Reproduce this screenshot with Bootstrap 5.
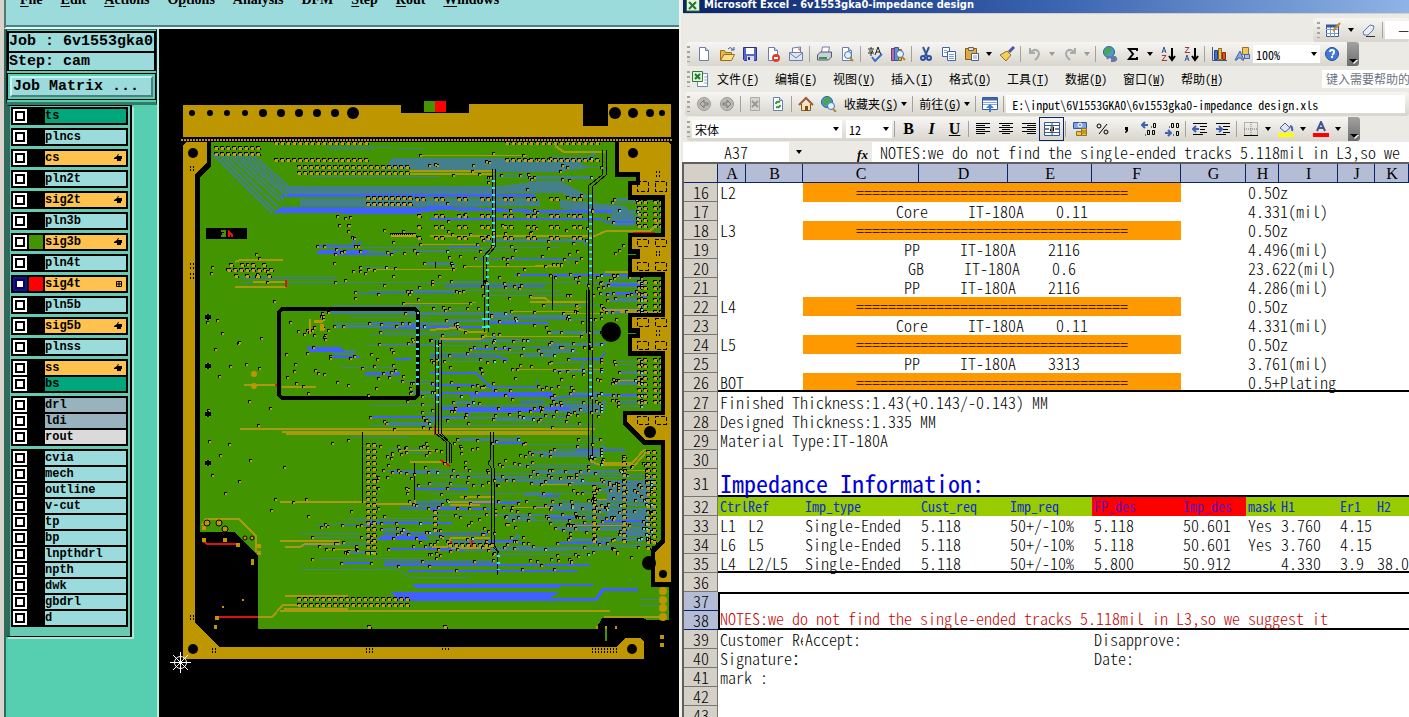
<!DOCTYPE html>
<html lang="zh-CN">
<head>
<meta charset="utf-8">
<meta name="viewport" content="width=device-width, initial-scale=1">
<title>Impedance design review</title>
<link href="https://cdn.jsdelivr.net/npm/bootstrap@5.3.0/dist/css/bootstrap.min.css" rel="stylesheet">
<style>
body{background:#000;color:#000;font-family:"Liberation Sans",sans-serif;line-height:1}
a{color:inherit;text-decoration:none}
/* CAM window */
.cam{flex:678 1 0;min-width:0;border-left:4px solid #d8d4cc;background:#000}
.cam-menu{height:29px;flex:none;background:#9cdbdb;border-bottom:2px solid #e6f7f4;border-left:2px solid #4a7a72;box-shadow:inset 0 -2px #4d8085;gap:18px;padding-left:14px;font:bold 14px/16px "Liberation Serif",serif}
.cam-menu a{margin-top:-8px;height:16px;text-underline-offset:2px}
.cam-side{width:155px;flex:none;background:#55cfb0;border-left:2px solid #2f6b5c;border-right:2px solid #b9ede0;font-family:"Liberation Mono",monospace;font-weight:bold}
.job{border:1px solid #123;border-bottom:3px solid #2f7c6b;border-top-color:#2f7c6b;padding:1px 0 2px;font-size:15px;height:76px;background:#55cfb0}
.job-line{height:20px;border:2px solid #000;border-bottom-width:0;background:#9cdbdb;line-height:18px;white-space:pre}
.job-line+.job-line{height:20px;border-bottom-width:1px}
.job-btn-box{border:1px solid #000;padding:2px;margin-top:2px;height:27px}
.job-btn{background:#9cdbdb;border:2px solid;border-color:#c8f3ef #4d8085 #4d8085 #c8f3ef;border-radius:0;font:bold 15px/18px "Liberation Mono",monospace;padding:0 0 0 1px;width:100%;text-align:left;height:21px;display:block}
.layers{width:126px;border:1px solid #000;border-width:1px 2px 1px 4px;border-left-color:#2f6b5c;padding:1px 2px 9px 1px;box-shadow:2px 2px #a9e8d8;gap:3px;background:#67cbb4;font-size:12px}
.grp{border:2px solid #000;background:#000;gap:2px}
.ly{height:14px;line-height:14px}
.ly input{appearance:none;width:14px;height:14px;margin:0;flex:none;border:2px solid #fff;background:#fff;box-shadow:inset 0 0 0 2px #000}
.ly input:checked{border-color:#10109a;box-shadow:inset 0 0 0 2px #06065a}
.sw{width:14px;margin:0 2px;background:#000;flex:none;height:14px}
.sw.g{background:#429500}.sw.r{background:#f00}
.nm{background:#9cdbdb;color:#000}
.nm.t{background:#00a67c}.nm.o{background:#ffc24e}.nm.s{background:#98b3bd}.nm.w{background:#dadada}
.board{min-width:0;background:#000}
/* spreadsheet window */
.xl{flex:731 1 0;min-width:0;background:#eceae5;border-left:2px solid #f4f2ee;font-family:"Noto Sans CJK SC","Noto Sans CJK TC",sans-serif;font-feature-settings:"hwid","liga" 0;font-size:12px}
.xl input,.xl button,.xl select{font:inherit;font-feature-settings:inherit;color:inherit;border:0;border-radius:0;background:none;padding:0;margin:0;line-height:normal}
.xl svg{display:block;flex:none}
.title{height:14px;flex:none;background:linear-gradient(90deg,#0a246a,#3a62ae 50%,#8fb4e6);color:#fff;font:bold 11px/10px "DejaVu Sans Condensed","DejaVu Sans",sans-serif;padding-left:3px;margin-left:2px;border-bottom:1px solid #d4d0c8}
.bar{height:24px;flex:none;padding-left:2px;margin:0 0 1px 4px}
.shade{background:linear-gradient(#f7f6f3,#d8d5cd);border-radius:3px}
.grip{width:3px;height:16px;margin-right:2px;background:repeating-linear-gradient(#a5a29a 0 2px,transparent 2px 5px);flex:none}
.xl .ib{width:23px;height:22px;flex:none;display:flex;align-items:center;justify-content:center}
.xl .ar{width:12px;height:20px;flex:none;display:flex;align-items:center;justify-content:center}
.ar::before{content:"";border:3px solid transparent;border-top:4px solid #000;border-bottom:0}
.ar.off::before{border-top-color:#999}
.letter{font:16px "Liberation Serif",serif}
.fx{font:italic bold 13px "Liberation Serif",serif}
.sp{width:1px;height:16px;background:#a5a29a;margin:0 2px;flex:none}
.cap{width:12px;height:24px;flex:none;background:linear-gradient(#a2a2a2,#6d6d6d);display:flex;align-items:end;justify-content:center;padding-bottom:3px;border-radius:0 3px 3px 0}
.cap::before{content:"";border:4px solid transparent;border-top:4px solid #000;border-bottom:0;filter:drop-shadow(1px 1px #fff)}
.box{background:#fff;height:18px;display:flex;align-items:center}
.xl .box input{min-width:0;width:100%;padding-left:3px}
.xl .box .addr{padding-left:6px}
.w-font{width:150px}.w-size{width:46px}.w-zoom{width:67px}.w-help{width:87px}
.draw-bar{width:96px;height:24px}
.mi{width:58px;padding-left:8px;white-space:nowrap;line-height:18px}
.sel{background:#dbe0ec;outline:1px solid #0a246a}
.fbar{height:20px;flex:none;font-size:16px}
.fbar input{height:20px}
.xl .namebox{width:106px;text-align:center;background:#fff;margin-left:2px}
.xl .fin{background:#fff;padding-left:8px;min-width:0}
.xl .fbar input{font-weight:300}
.sheet-wrap{background:#fff;border-left:2px solid #606060;border-top:2px solid #606060;margin-left:1px;min-height:0}
.sheet{table-layout:fixed;border-collapse:separate;border-spacing:0;width:100%;font-size:16px;line-height:19px;font-weight:300}
.c-n{width:34px}.c-a{width:28px}.c-b{width:57px}.c-c{width:116px}.c-d{width:89px}.c-e{width:84px}.c-g{width:65px}.c-h{width:33px}.c-i{width:59px}.c-j{width:37px}
.sheet tr{height:19px}
.sheet td,.sheet th{padding:0;white-space:pre;font-weight:300;height:19px}
.sheet td{padding-left:2px}
.sheet tbody th{background:#d4d0c8;text-align:center;box-shadow:inset 0 -1px #77756d,inset -1px 0 #77756d}
.sheet tbody .gap th{height:20px}
.sheet thead th{background:#b5bdd6;text-align:center;height:18px;line-height:18px;box-shadow:inset -1px 0 #0a246a,inset 0 -1px #0a246a;font-family:"Liberation Serif",serif;font-weight:400}
.sheet thead th:first-child{background:#d4d0c8}
.sheet .mid{text-align:center;padding:0}
.sheet .cu{background:#ff9900}
.sheet .rule td{box-shadow:inset 0 -2px #000}
.sheet .tall td{height:28px;font-size:24px;line-height:28px;color:#0000d8;font-weight:400}
.sheet .hd td{background:#99cc00;font-size:14px;color:#1030d0;font-weight:400}
.sheet .hd .rd{background:#f00;color:#6a10b8}
.sheet tbody th.on{background:#b5bdd6;box-shadow:inset 0 -1px #0a246a}
.sheet .note{border:2px solid #000;border-right:0;vertical-align:bottom;color:#c40000;padding-left:0}
.sheet .cut{overflow:hidden}
</style>
</head>
<body class="vh-100 overflow-hidden d-flex">

<section class="cam d-flex flex-column">
  <nav class="cam-menu d-flex overflow-hidden">
    <a href="#"><u>F</u>ile</a><a href="#"><u>E</u>dit</a><a href="#"><u>A</u>ctions</a><a href="#">O<u>p</u>tions</a><a href="#">Analysis</a><a href="#">DFM</a><a href="#"><u>S</u>tep</a><a href="#"><u>R</u>out</a><a href="#"><u>W</u>indows</a>
  </nav>
  <div class="d-flex flex-grow-1 overflow-hidden">
    <aside class="cam-side">
      <div class="job">
        <div class="job-line">Job : 6v1553gka0</div>
        <div class="job-line">Step: cam</div>
        <div class="job-btn-box"><button class="job-btn" type="button">Job Matrix ...</button></div>
      </div>
      <div class="layers d-flex flex-column" id="layers"></div>
    </aside>
    <svg class="board flex-grow-1 h-100" viewBox="159 29 519 688" preserveAspectRatio="xMinYMin meet" shape-rendering="crispEdges" fill="none" role="img" aria-label="Board layout">
      <!-- substrate -->
      <path fill="#429500" d="M211 142H664V587H669V622H650L643 618H602L596 629H258V555L234 532H200V178L211 166Z"/>
      <g id="traces"></g>
      <!-- thick buses -->
      <path fill="#44808b" d="M283 186H500L540 181H560L592 198H570L562 193H500L490 196H290ZM392 158H500L530 162L575 160L590 168L560 171H500L385 169ZM300 199H540V206H300ZM560 200L625 206L634 214V226H612V214L560 208ZM607 482H648V500H607ZM607 508H648V520H607ZM507 517H535V521H507ZM524 492H552V496H524ZM333 350H355V355H333Z"/>
      <path fill="#4060ff" d="M272 213L282 207H413L440 206L540 210H612V213H540L440 210L412 214ZM278 197L284 194H535V197ZM390 592H560L550 598H595L602 588H638V591H604L597 601H400ZM306 347H340L345 352H310ZM470 392H551L556 397H470ZM441 407H570V410H441ZM365 372H400V375H365ZM382 536H425L430 540H376ZM320 250H372L360 254H315Z"/>
      <path stroke="#4060ff" stroke-width="2" d="M384 562H495M384 565H590M408 571H577M413 585H593M415 587H560M380 328H430M430 219H600L606 222H636M450 247H480M430 327H490M515 275H630M490 323H549M430 356H495L508 360M430 373H476L495 391M430 385H480M445 286H545M435 399L443 393H540L552 399L570 396H600M600 395H637M575 450H625M400 508H462M416 489H468M430 509H490M370 523H452M383 534H488M330 357H360M395 359H412M540 496H560M520 402H545"/>
      <path stroke="#44808b" stroke-width="2" d="M213 154L272 213M218 154L275 211M223 154L278 207M228 154L281 202M233 154L284 200M238 155L287 196M243 155L287 193M248 155L287 189M253 155L288 186"/>
      <path stroke="#44808b" d="M325 147H393M330 149H375M425 148H395M310 176H440M318 247H560M243 279H337M240 276H335M240 282H430M372 282H590M370 290H560M332 305H440M350 317H430M333 323H420M365 345H440M370 334H460M340 367H395M395 380H430M370 405H460M370 425H600M350 437H410M388 449H424M318 558H425M300 569H397L410 577H470M355 520H420M300 533H360M315 526L345 523L350 518H440M298 545H370M430 340H560M430 345H500M430 352H580M430 418H520M430 473H600M430 477H640M430 493H610M430 500H580M430 515H600M560 530H640M510 550H570M607 485H650M607 545H648M640 599H662M640 605H662"/>
      <!-- gold and red tracks -->
      <g stroke="#a89a10" stroke-width="2">
        <path d="M410 171H494M410 174H494M240 429H595M282 432H590M286 434H590M244 385H281M282 387H316M280 502H366M366 504H415L415 500M235 262L240 260H283M253 282H286M235 287H286M430 236H595L606 231H650L664 215M535 266H560M530 302H590M531 298L545 298L550 302M555 146L564 152H605M202 525L206 519H239L256 536V552M285 596H348M284 609H348M280 611H610M258 617H272L283 605H298M280 541H340M285 547H300L305 544H340M280 502H360M430 330L455 328L470 332H487M440 339H480L487 335M590 461L600 465H635L648 450M600 463H632L645 449M450 502H494M450 505H480M432 547H447L451 538H490M451 548H490M410 462H450M620 312H662M605 272H650M600 310H640M604 617H662M460 497H494"/>
      </g>
      <path stroke="#e01010" stroke-width="2" d="M203 541L207 544H237M217 617H258M629 239L634 233H655M275 385H281M286 280V287M435 425V435M440 460L450 466M451 541V547M472 539V547"/>
      <!-- black clearances along vertical tracks -->
      <path stroke="#000" d="M492 169V247L483 257V285M495 169V247L486 258V285M602 150V175L588 186V460M606 150V175L592 187V460M484 285V332M488 285V332M586 290V333M589 290V350M435 340V433L446 442V463M438 340V433L449 442V463M441 340V433L451 444V463M490 432V460L488 463L491 468V545L497 551V575M493 432V460L494 468V545L499 553M362 432V503M414 463V500M552 275V310M435 262V268"/>
      <path stroke="#000" stroke-width="4" d="M282 309H415L418 312V395L415 398H282L279 395V312Z"/>
      <path stroke="#30e8f0" stroke-dasharray="2 5" stroke-width="3" d="M493 180V245M590 195V280M487 255V330M437 345V405M417 320V390M590 365V400M498 555V570"/>
      <path fill="#30e8f0" d="M628 190H640L634 197ZM482 318H490V320H482ZM482 326H490V328H482Z"/>
      <!-- connector pad rows -->
      <g id="rows"></g>
      <g id="pads"></g>
      <!-- frame -->
      <path stroke="#000" stroke-width="9" d="M619 142H668L671 145V582H655V552L665 542V440H645L627 422V415H665V351H632V338H640V328H632V317H665V272H632V259H640V249H632V237H665V195H632V185H640V172H619Z"/>
      <path fill="#000" d="M671 137H678V717H671ZM605 137H678V142H605ZM656 582H678V587H656ZM602 620H678V717H602Z"/>
      <g fill="#be9600">
        <path d="M619 142H668L671 145V582H655V552L665 542V440H645L627 422V415H665V351H632V338H640V328H632V317H665V272H632V259H640V249H632V237H665V195H632V185H640V172H619Z"/>
        <path d="M183 105H401V113H469V104H583V126H608V104H671V137H183Z"/>
        <path d="M186 142H207V162L195 174V623L219 647H617L625 638H640L644 642V659H183V145Z"/>
        <path d="M202 526h4v4h-4zM202 538h4v4h-4zM223 538h4v4h-4zM236 543h4v4h-4zM215 616h4v4h-4zM214 625h3v4h-3zM251 559h3v6h-3zM257 551h4v4h-4zM257 544h4v4h-4zM242 599h2v2h-2zM222 606h2v2h-2zM660 635h4v4h-4zM660 643h4v4h-4zM596 626h2v3h-2zM615 626h2v3h-2zM605 626h2v3h-2z"/>
      </g>
      <path stroke="#be9600" stroke-width="2" stroke-dasharray="2 1" d="M181 139.500H673"/>
      <g stroke="#000" stroke-dasharray="4 2"><rect x="637" y="181" width="11" height="10"/><rect x="655" y="181" width="11" height="10"/><rect x="637" y="239" width="11" height="7"/><rect x="655" y="239" width="11" height="7"/><rect x="637" y="262" width="11" height="8"/><rect x="655" y="262" width="11" height="8"/><rect x="637" y="318" width="11" height="8"/><rect x="655" y="318" width="11" height="8"/><rect x="637" y="341" width="11" height="8"/><rect x="655" y="341" width="11" height="8"/><rect x="637" y="416" width="11" height="8"/><rect x="655" y="416" width="11" height="8"/></g>
      <path stroke="#000" stroke-width="2" stroke-dasharray="1 2" d="M190 167h6M190 170h6M190 264h6M190 268h6M190 274h6M190 278h6M190 616h6M190 619h6M212 649h6M212 652h6M366 649h8M366 652h8M442 649h8M592 649h26M592 652h26M656 172h6M656 176h6M656 252h6M656 255h6M656 331h6M656 335h6"/>
      <g fill="#000" shape-rendering="auto">
        <circle cx="192" cy="113" r="3"/><circle cx="210" cy="113" r="3"/><circle cx="227" cy="113" r="3"/><circle cx="245" cy="113" r="3"/><circle cx="263" cy="113" r="4"/><circle cx="281" cy="113" r="4"/><circle cx="299" cy="113" r="4"/><circle cx="317" cy="113" r="4"/><circle cx="335" cy="113" r="4"/><circle cx="353" cy="113" r="6"/>
        <circle cx="615" cy="113" r="6"/><circle cx="633" cy="113" r="5"/><circle cx="650" cy="113" r="4"/><circle cx="662" cy="113" r="3"/>
        <circle cx="193" cy="153" r="5"/><circle cx="193" cy="649" r="5"/><circle cx="632" cy="649" r="5"/><circle cx="633" cy="153" r="5"/><circle cx="611" cy="332" r="10"/><circle cx="650" cy="432" r="6"/><circle cx="663" cy="574" r="4"/><circle cx="649" cy="563" r="7"/>
      </g>
      <g fill="#be9600" shape-rendering="auto"><circle cx="663" cy="591" r="4"/><circle cx="663" cy="600" r="4"/><circle cx="663" cy="608" r="4"/><circle cx="663" cy="617" r="4"/><circle cx="254" cy="374" r="3"/><circle cx="254" cy="386" r="3"/></g>
      <g fill="#be9600" stroke="#000" shape-rendering="auto"><circle cx="207" cy="523" r="3"/><circle cx="219" cy="523" r="3"/><circle cx="225" cy="529" r="3"/><circle cx="245" cy="538" r="2"/><circle cx="252" cy="538" r="2"/></g>
      <path fill="#be9600" d="M309 319h2v14h-2zM314 320h9v3h-9zM320 324h4v7h-4z"/>
      <path fill="#429500" d="M424 101h11v11h-11z"/><path fill="#f00" d="M435 101h11v11h-11z"/>
      <path fill="#000" d="M206 228h41v11h-41z"/>
      <path stroke="#429500" stroke-width="2" d="M221 231h4v5h-4M222 234h4"/><path fill="#f01010" d="M228 230l5 4v3h-2v-2h-1v2h-2z"/>
      <path stroke="#429500" stroke-width="2" d="M606 629V641"/>
      <g stroke="#fff" shape-rendering="auto"><path d="M170 662.500H191M180.500 652V673M173 655L188 670M188 655L173 670"/><circle cx="180.500" cy="662.500" r="6"/></g>
    </svg>
  </div>
</section>

<main class="xl d-flex flex-column overflow-hidden">
  <div class="title d-flex overflow-hidden">
    <svg width="14" height="12" viewBox="0 0 14 12" class="me-1"><path fill="#e9f1e4" stroke="#2e7d32" d="M.5-2h13v13H.5z"/><path stroke="#1c7a2e" stroke-width="2" d="M3 2l7 7M10 2L3 9"/></svg>
    <span class="text-nowrap">Microsoft Excel - 6v1553gka0-impedance design</span>
  </div>
  <div class="bar d-flex justify-content-end mt-1 mb-0 align-items-center">
    <div class="shade draw-bar d-flex align-items-center ps-1">
      <span class="grip"></span>
      <button class="ib" type="button" aria-label="绘图边框"><svg width="17" height="16" fill="none"><path fill="#fff" stroke="#35589a" d="M1.500 3.500h12v11h-12z"/><path stroke="#7c9bd0" d="M1 7.500h12M1 11.500h12M5.500 4v11M9.500 4v11"/><path stroke="#35589a" stroke-width="3" d="M1 4h12"/><path stroke="#c98a2a" stroke-width="2" d="M8 9l7-8"/></svg></button><button class="ar" type="button" aria-label="更多"></button>
      <button class="ib" type="button" aria-label="擦除"><svg width="16" height="14" fill="none"><path fill="#e9eef8" stroke="#6178a8" d="M2 9l7-7 4 1-1 4-5 5H3z"/><path stroke="#333" d="M5 13.500h9"/></svg></button>
      <span class="sp"></span><span class="box flex-grow-1 justify-content-end">—</span>
    </div>
  </div>
  <div class="bar d-flex">
    <div class="shade d-flex align-items-center" id="std"><span class="grip"></span></div>
  </div>
  <div class="bar d-flex align-items-center">
    <span class="grip"></span>
    <svg width="17" height="16" fill="none"><path fill="#fff" stroke="#6c86b8" d="M5.500 2.500h10v13h-10z"/><path stroke="#9ab" d="M12 6h3M12 9h3M12 12h3"/><path fill="#dff0dc" stroke="#2e7d32" d="M.5.5h10v10H.5z"/><path stroke="#1c7a2e" stroke-width="2" d="M3 3l5 5M8 3L3 8"/></svg>
    <nav class="d-flex flex-grow-1">
      <a href="#" class="mi">文件(<u>F</u>)</a><a href="#" class="mi">编辑(<u>E</u>)</a><a href="#" class="mi">视图(<u>V</u>)</a><a href="#" class="mi">插入(<u>I</u>)</a><a href="#" class="mi">格式(<u>O</u>)</a><a href="#" class="mi">工具(<u>T</u>)</a><a href="#" class="mi">数据(<u>D</u>)</a><a href="#" class="mi">窗口(<u>W</u>)</a><a href="#" class="mi">帮助(<u>H</u>)</a>
    </nav>
    <span class="box w-help overflow-hidden text-nowrap text-secondary ps-1">键入需要帮助的</span>
  </div>
  <div class="bar shade d-flex align-items-center" id="web">
    <span class="grip"></span>
  </div>
  <div class="bar d-flex">
    <div class="shade d-flex align-items-center" id="fmt"><span class="grip"></span></div>
  </div>
  <div class="fbar d-flex align-items-center">
    <input class="namebox" value="A37" aria-label="名称框">
    <button class="ar mx-1" type="button" aria-label="名称列表"></button>
    <button type="button" class="ms-5 me-1" aria-label="插入函数"><i class="fx">fx</i></button>
    <input class="fin flex-grow-1" aria-label="编辑栏" value="NOTES:we do not find the single-ended tracks 5.118mil in L3,so we suggest it">
  </div>
  <div class="sheet-wrap flex-grow-1 overflow-hidden">
    <table class="sheet">
      <colgroup><col class="c-n"><col class="c-a"><col class="c-b"><col class="c-c"><col class="c-d"><col class="c-e"><col class="c-d"><col class="c-g"><col class="c-h"><col class="c-i"><col class="c-j"><col></colgroup>
      <thead><tr><th></th><th>A</th><th>B</th><th>C</th><th>D</th><th>E</th><th>F</th><th>G</th><th>H</th><th>I</th><th>J</th><th>K</th></tr></thead>
      <tbody>
        <tr><th>16</th><td>L2</td><td></td><td colspan="4" class="mid cu">==================================</td><td></td><td colspan="4">0.5Oz</td></tr>
        <tr><th>17</th><td></td><td></td><td colspan="4" class="mid">Core     IT-180A    0.11</td><td></td><td colspan="4">4.331(mil)</td></tr>
        <tr><th>18</th><td>L3</td><td></td><td colspan="4" class="mid cu">==================================</td><td></td><td colspan="4">0.5Oz</td></tr>
        <tr><th>19</th><td></td><td></td><td colspan="4" class="mid">PP     IT-180A    2116</td><td></td><td colspan="4">4.496(mil)</td></tr>
        <tr><th>20</th><td></td><td></td><td colspan="4" class="mid">GB     IT-180A    0.6</td><td></td><td colspan="4">23.622(mil)</td></tr>
        <tr><th>21</th><td></td><td></td><td colspan="4" class="mid">PP     IT-180A    2116</td><td></td><td colspan="4">4.286(mil)</td></tr>
        <tr><th>22</th><td>L4</td><td></td><td colspan="4" class="mid cu">==================================</td><td></td><td colspan="4">0.5Oz</td></tr>
        <tr><th>23</th><td></td><td></td><td colspan="4" class="mid">Core     IT-180A    0.11</td><td></td><td colspan="4">4.331(mil)</td></tr>
        <tr><th>24</th><td>L5</td><td></td><td colspan="4" class="mid cu">==================================</td><td></td><td colspan="4">0.5Oz</td></tr>
        <tr><th>25</th><td></td><td></td><td colspan="4" class="mid">PP     IT-180A    3313</td><td></td><td colspan="4">3.761(mil)</td></tr>
        <tr class="rule"><th>26</th><td>BOT</td><td></td><td colspan="4" class="mid cu">==================================</td><td></td><td colspan="4">0.5+Plating</td></tr>
        <tr class="gap"><th>27</th><td colspan="11">Finished Thickness:1.43(+0.143/-0.143) MM</td></tr>
        <tr><th>28</th><td colspan="11">Designed Thickness:1.335 MM</td></tr>
        <tr><th>29</th><td colspan="11">Material Type:IT-180A</td></tr>
        <tr><th>30</th><td colspan="11"></td></tr>
        <tr class="tall rule"><th>31</th><td colspan="11">Impedance Information:</td></tr>
        <tr class="hd"><th>32</th><td>Ctrl</td><td>Ref</td><td>Imp_type</td><td>Cust_req</td><td>Imp_req</td><td class="rd">FP_des</td><td class="rd">Imp_des</td><td>mask</td><td>H1</td><td>Er1</td><td>H2</td></tr>
        <tr><th>33</th><td>L1</td><td>L2</td><td>Single-Ended</td><td>5.118</td><td>50+/-10%</td><td>5.118</td><td>50.601</td><td>Yes</td><td>3.760</td><td>4.15</td><td></td></tr>
        <tr><th>34</th><td>L6</td><td>L5</td><td>Single-Ended</td><td>5.118</td><td>50+/-10%</td><td>5.118</td><td>50.601</td><td>Yes</td><td>3.760</td><td>4.15</td><td></td></tr>
        <tr class="rule"><th>35</th><td>L4</td><td>L2/L5</td><td>Single-Ended</td><td>5.118</td><td>50+/-10%</td><td>5.800</td><td>50.912</td><td></td><td>4.330</td><td>3.9</td><td>38.0</td></tr>
        <tr><th>36</th><td colspan="11"></td></tr>
        <tr><th class="on">37</th><td colspan="11" rowspan="2" class="note">NOTES:we do not find the single-ended tracks 5.118mil in L3,so we suggest it</td></tr>
        <tr><th class="on">38</th></tr>
        <tr><th>39</th><td colspan="2" class="cut">Customer Re</td><td colspan="3">Accept:</td><td colspan="6">Disapprove:</td></tr>
        <tr><th>40</th><td colspan="5">Signature：</td><td colspan="6">Date:</td></tr>
        <tr><th>41</th><td colspan="11">mark :</td></tr>
        <tr><th>42</th><td colspan="11"></td></tr>
        <tr><th>43</th><td colspan="11"></td></tr>
      </tbody>
    </table>
  </div>
</main>

<script src="https://cdn.jsdelivr.net/npm/bootstrap@5.3.0/dist/js/bootstrap.bundle.min.js"></script>
<script>
// Layer list: groups of [name, tone, swatch, mark]
const hand='<svg width="8" height="8" class="me-1"><path d="M5 0L4 2H8V5H7V7H3V5H0V4L3 2L4 0Z"/></svg>';
const grid='<svg width="6" height="6" fill="none" stroke="#000" class="me-1"><path d="M.5.500h5v5h-5zM3 0v6M0 3h6"/></svg>';
const groups=[[['ts','t']],[['plncs']],[['cs','o','',hand]],[['pln2t']],[['sig2t','o','',hand]],[['pln3b']],[['sig3b','o','g',hand]],[['pln4t']],[['sig4t','o','r',grid,1]],[['pln5b']],[['sig5b','o','',hand]],[['plnss']],
[['ss','o','',hand],['bs','t']],[['drl','s'],['ldi','s'],['rout','w']],['cvia','mech','outline','v-cut','tp','bp','lnpthdrl','npth','dwk','gbdrl','d'].map(n=>[n])];
document.getElementById('layers').innerHTML=groups.map(g=>'<div class="grp d-flex flex-column">'+g.map(([n,t='',c='',m='',on])=>
 `<label class="ly d-flex"><input type="checkbox" ${on?'checked':''}><span class="sw ${c}"></span><span class="nm ${t} flex-grow-1 d-flex justify-content-between align-items-center">${n}${m}</span></label>`).join('')+'</div>').join('');

// Toolbars
const page='<path fill="#fff" stroke="#6a7fae" d="M3.500 1.500h6l3 3v10h-9z"/><path fill="#cbd6ee" stroke="#6a7fae" d="M9.500 1.500v3h3"/>';
const I={
new:page,
open:'<path fill="#e9b64a" stroke="#96701c" d="M1.500 14V4.500h4l1 2h6V9"/><path fill="#ffdf85" stroke="#96701c" d="M1.500 14.500L5 8.500h10.500l-3 6z"/><path stroke="#35589a" d="M9 3q3-3 5 1M12 4h3V1"/>',
save:'<path fill="#5768c8" stroke="#2b347e" d="M1.500 1.500h13v13h-12l-1-1z"/><path fill="#fff" d="M4 2h8v6H4z"/><path fill="#d6daf0" d="M5 10h7v5H5z"/><path fill="#2b347e" d="M6 11h2v3H6z"/>',
perm:page+'<circle cx="11" cy="12" r="4" fill="#d8432b"/><path stroke="#fff" stroke-width="2" d="M9 12h4"/>',
mail:'<path fill="#fff" stroke="#6a7fae" d="M4.500 6V2l8-1v6"/><path stroke="#c55" d="M10 3h2v2"/><path fill="#dfe6f5" stroke="#6a7fae" d="M1.500 6.500h13v8h-13zM1.500 7l6.500 5 6.500-5"/>',
print:'<path fill="#fff" stroke="#6a7fae" d="M5.500 6l1-5h7l-1 5"/><path fill="#c9ceda" stroke="#4d5872" d="M1.500 9l3-3h11v5l-3 3h-11z"/><path stroke="#2e9b3c" stroke-width="2" d="M3 12h8"/>',
prev:page+'<circle cx="9" cy="9" r="3.500" fill="#dff1ff" stroke="#4b6fa8"/><path stroke="#b8862d" stroke-width="2" d="M11 12l3 3"/>',
spell:'<path stroke="#222" d="M1 3h6M4 1v2M2 5h4L4 7v3M1 7h6M8 9l3-8 3 8M9 6h4"/><path stroke="#3a6fd0" stroke-width="2" d="M5 11l3 4 7-7"/>',
res:'<path fill="#b46aa8" stroke="#6c3a72" d="M1.500 2.500h3v12h-3z"/><path fill="#6a8fd0" stroke="#35589a" d="M4.500 1.500h4v13h-4z"/><path fill="#e0b060" stroke="#8c6420" d="M8.500 3.500h3v11h-3z"/><circle cx="10" cy="8" r="3.500" fill="#dff1ff" stroke="#4b6fa8"/><path stroke="#b8862d" stroke-width="2" d="M12 11l3 3"/>',
cut:'<path stroke="#35589a" stroke-width="2" d="M5 1l4 9M11 1L7 10"/><circle cx="5" cy="12" r="2" stroke="#2b4fa0" stroke-width="2"/><circle cx="11" cy="12" r="2" stroke="#2b4fa0" stroke-width="2"/>',
copy:'<path fill="#fff" stroke="#3f63b0" d="M1.500 1.500h7v9h-7z"/><path fill="#fff" stroke="#3f63b0" d="M6.500 5.500h8v9h-8z"/><path stroke="#7c9bd0" d="M8 8.500h5M8 10.500h5M8 12.500h5M3 4.500h3M3 6.500h3"/>',
paste:'<path fill="#e2a93c" stroke="#805c18" d="M1.500 2.500h11v11h-11z"/><path fill="#ddd" stroke="#666" d="M4.500 1.500h5v3h-5z"/><path fill="#fff" stroke="#4c5f8c" d="M7.500 7.500h7v7h-7z"/><path stroke="#7c9bd0" d="M9 10h4M9 12h4"/>',
brush:'<path stroke="#4a55a5" stroke-width="3" d="M15 1l-5 5"/><path fill="#f2cf5c" stroke="#94731e" d="M8 5l4 4-5 6-6-6z"/>',
undo:'<path stroke="#aaa" stroke-width="2" d="M3 2v5h5M3 7q4-5 8-2 3 4-3 9"/>',
redo:'<path stroke="#aaa" stroke-width="2" d="M13 2v5H8M13 7Q9 2 5 5q-3 4 3 9"/>',
link:'<circle cx="7" cy="6" r="5.500" fill="#4a9bd0" stroke="#2a5f90"/><path fill="#4aa84a" d="M4 3l4-2 2 4-3 2-3 3-2-4z"/><path stroke="#67799e" stroke-width="2" d="M5 13q3-4 5 0h4M8 11h5q3 3-1 4H9"/>',
sum:'<path stroke="#000" stroke-width="2" d="M12 5V3H4l4 5-4 5h8v-2"/>',
az:'<path stroke="#35589a" d="M2 7l2-6 2 6M3 5h3"/><path stroke="#a33" d="M2 9.500h4L2 14.500h5"/><path stroke="#000" stroke-width="2" d="M12 2v11M9 10l3 4 3-4"/>',
za:'<path stroke="#a33" d="M2 1.500h4L2 6.500h5"/><path stroke="#35589a" d="M2 15l2-6 2 6M3 13h3"/><path stroke="#000" stroke-width="2" d="M12 2v11M9 10l3 4 3-4"/>',
chart:'<path stroke="#35589a" d="M1.500 1v13.500H16"/><path fill="#4a72c8" stroke="#24428c" d="M3.500 4.500h3v9h-3z"/><path fill="#f0c040" stroke="#8c6420" d="M7.500 2.500h3v11h-3z"/><path fill="#d8532b" stroke="#8c2a14" d="M11.500 6.500h3v7h-3z"/>',
draw:'<path fill="#f0c860" stroke="#94731e" d="M8.500 1.500h6v7h-6z"/><path fill="#8fa8dc" stroke="#3f63b0" d="M1 14L6 5l4 9H8l-1-2H4l-1 2z"/><path fill="#aebfe6" stroke="#3f63b0" d="M10.500 8.500h5v4h-5z"/>',
help:'<circle cx="8" cy="8" r="6.500" fill="#3f7ad8" stroke="#23509c"/><path stroke="#fff" stroke-width="2" d="M6 6q0-2 2-2t2 2-2 3M8 10v2"/>',
back:'<circle cx="8" cy="8" r="6.500" fill="#bdbab4" stroke="#999"/><path stroke="#777" d="M12 7H8V4L4 8l4 4V9h4z"/>',
fwd:'<circle cx="8" cy="8" r="6.500" fill="#bdbab4" stroke="#999"/><path stroke="#777" d="M4 7h4V4l4 4-4 4V9H4z"/>',
stop:'<path fill="#d9d6cf" stroke="#aaa" d="M3.500 1.500h9v13h-9z"/><path stroke="#999" stroke-width="2" d="M5 5l6 6M11 5l-6 6"/>',
ref:page+'<path stroke="#2e9b3c" stroke-width="2" d="M6 8q0-3 4-2M10 9q0 3-4 2"/>',
home:'<path fill="#f6e3ae" stroke="#7a5a28" d="M3.500 8v6.500h9V8"/><path stroke="#9c5a30" stroke-width="2" d="M1 9l7-7 7 7"/><path fill="#7a4a20" d="M7 10h3v5H7z"/>',
find:'<circle cx="6" cy="6" r="5.500" fill="#4a9bd0" stroke="#2a5f90"/><path fill="#4aa84a" d="M4 2l4-1 2 4-3 2-3 3-2-4z"/><circle cx="10" cy="10" r="3.500" fill="#dff1ff" stroke="#4b6fa8"/><path stroke="#b8862d" stroke-width="2" d="M12 13l3 3"/>',
only:'<path fill="#fff" stroke="#35589a" d="M.5 1.500h15v12H.5z"/><path stroke="#3f63b0" stroke-width="3" d="M1 3h14"/><path stroke="#8ba5dc" d="M1 6.500h14M1 8.500h14"/><path fill="#3f7ad8" d="M8 8l4 4H9v4H7v-4H4z"/>',
al:'<path stroke="#000" d="M1 2.500h14M1 4.500h9M1 6.500h14M1 8.500h9M1 10.500h14M1 12.500h9"/>',
ac:'<path stroke="#000" d="M1 2.500h14M4 4.500h8M1 6.500h14M4 8.500h8M1 10.500h14M4 12.500h8"/>',
ars:'<path stroke="#000" d="M1 2.500h14M6 4.500h9M1 6.500h14M6 8.500h9M1 10.500h14M6 12.500h9"/>',
mg:'<path fill="#fff" stroke="#35589a" d="M.5 1.500h15v13H.5zM.5 4.500h15M.5 11.500h15M8 1v3M8 12v3"/><path stroke="#000" d="M1 8h4M11 8h4M6.500 6h3v4h-3V8h3"/>',
cur:'<path fill="#7fa0e0" stroke="#35589a" d="M1.500 1.500h13v6h-13z"/><circle cx="8" cy="4" r="2" stroke="#fff"/><path fill="#f0c040" stroke="#94731e" d="M9.500 7.500h5v7h-5zM9.500 10h5M9.500 12h5M4.500 10.500h5v4h-5z"/>',
pc:'<circle cx="4" cy="5" r="2" stroke="#000"/><circle cx="11" cy="11" r="2" stroke="#000"/><path stroke="#000" d="M12 3L4 13"/>',
cm:'<path fill="#000" d="M7 6h3v4l-2 2H7l1-3H7z"/>',
i1:'<path stroke="#3f63b0" stroke-width="2" d="M1 4h6M4 1L1 4l3 3"/><path stroke="#000" d="M10 6h1M12.500 2.500h2v4h-2zM4 14h1M6.500 9.500h2v4h-2zM11.500 9.500h2v4h-2z"/>',
i2:'<path stroke="#3f63b0" stroke-width="2" d="M1 12h6M4 9l3 3-3 3"/><path stroke="#000" d="M5 6h1M7.500 2.500h2v4h-2zM12.500 2.500h2v4h-2zM9 14h1M12.500 10.500h2v4h-2z"/>',
o1:'<path stroke="#000" d="M1 2.500h14M8 5.500h7M8 8.500h5M8 11.500h7M1 13.500h10"/><path stroke="#3f63b0" stroke-width="2" d="M7 8H1M4 5L1 8l3 3"/>',
o2:'<path stroke="#000" d="M1 2.500h14M8 5.500h7M8 8.500h5M8 11.500h7M1 13.500h10"/><path stroke="#3f63b0" stroke-width="2" d="M1 8h6M4 5l3 3-3 3"/>',
bd:'<path stroke="#777" stroke-dasharray="1 1" d="M1.500 1.500h13v13h-13zM8 1v14M1 8h14"/><path stroke="#000" d="M1 14.500h14"/>',
fl:'<path fill="#dfe6f5" stroke="#4c5f8c" d="M2 7l5-5 5 5-5 4z"/><path stroke="#3f63b0" stroke-width="2" d="M12 5q3 1 2 5"/><path fill="#ff0" d="M0 12h16v4H0z"/>',
fc:'<path stroke="#3f5590" stroke-width="2" d="M4 10l4-9 4 9M5 7h6"/><path fill="#f00" d="M0 12h16v4H0z"/>'};
// Bold, italic and underline carry their own letter
const letter={B:'<b>B</b>',I:'<b><i>I</i></b>',U:'<b><u>U</u></b>'};
const ic=(k,c='')=>letter[k]?`<button type="button" class="ib" aria-label="${k}"><span class="letter">${letter[k]}</span></button>`:`<button type="button" class="ib ${c}" aria-label="${k}"><svg width="16" height="16" viewBox="0 0 16 16" fill="none">${I[k]}</svg></button>`;
const bar=s=>s.split(' ').map(k=>k=='|'?'<span class="sp"></span>':k=='v'?'<button type="button" class="ar" aria-label="更多"></button>':k=='x'?'<button type="button" class="ar off" aria-label="更多"></button>':ic(k,k=='mg'?'sel':'')).join('');
const combo=(v,c,l)=>`<span class="box ${c}"><input value="${v}" aria-label="${l}"><button type="button" class="ar" aria-label="${l}"></button></span>`;
const cap='<span class="cap ms-1"></span>';
const add=(id,h)=>document.getElementById(id).insertAdjacentHTML('beforeend',h);
add('std',bar('new open save perm mail | print prev | spell res | cut copy paste v brush | undo x redo x | link sum v az za | chart draw')+combo('100%','w-zoom','显示比例')+ic('help')+cap);
add('web',bar('back fwd | stop ref | home find')+'<a href="#" class="text-nowrap ms-1">收藏夹(<u>S</u>)</a>'+bar('v |')+'<a href="#" class="text-nowrap ms-1">前往(<u>G</u>)</a>'+bar('v | only |')+'<span class="box flex-grow-1 me-1"><input class="addr" value="E:\\input\\6V1553GKA0\\6v1553gka0-impedance design.xls" aria-label="地址"></span>');
add('fmt',combo('宋体','w-font me-1','字体')+combo('12','w-size','字号')+bar('| B I U | al ac ars mg | cur pc cm i1 i2 | o1 o2 | bd v fl v fc v')+cap);

// Board detail: repeatable scatter of traces and vias
let seed=7;const rnd=()=>(seed=(seed*16807)%2147483647)/2147483647,ri=(a,b)=>Math.floor(a+rnd()*(b-a));
let tr='',pads='';
const via=(x,y,c='#b8a020')=>`<path fill="#000" d="M${x} ${y}h3v3h-3z"/><path fill="${c}" d="M${x+1} ${y+1}h2v2h-2z"/>`;
[[420,600,146,180,8],[315,600,238,345,42],[370,600,345,428,34],[375,600,436,470,12],[380,645,470,556,60],[300,370,520,570,6],[590,636,195,232,6],[600,640,275,315,14],[612,640,360,408,16],[545,650,480,545,20]].forEach(([a,b,c,d,n])=>{
 for(let i=0;i<n;i++){const x=ri(a,b-20),w=Math.min(ri(18,110),b-x),y=ri(c,d),f=rnd();
  tr+=`<path stroke="${f<.18?'#4060ff':f<.26?'#a89a10':'#44808b'}" stroke-width="${f>.7?3:f<.12?2:1}" d="M${x} ${y}h${w}l${ri(0,8)} ${ri(-6,6)}"/>`;
  pads+=via(x-1,y-1)+via(x+w,y-1,f>.6?'#70d8b0':'#b8a020');}});
[[205,275,275,500,26],[205,270,245,275,8],[330,420,215,300,34],[285,415,312,396,60],[420,600,140,250,44],[430,600,250,430,140],[375,480,436,560,75],[480,645,440,560,100],[300,370,515,565,16],[595,640,240,320,16],[390,600,540,570,24],[270,360,400,520,8],[375,430,400,435,8]].forEach(([a,b,c,d,n])=>{for(let i=0;i<n;i++)pads+=via(ri(a,b),ri(c,d));});
[330,379,427,476].forEach(y=>pads+=`<path fill="#000" d="M205 ${y-15}h6v4h-6zM207 ${y-16}h2v6h-2z"/><path fill="#b8a020" d="M206 ${y-16}h1v1h-1zM209 ${y-16}h1v1h-1zM206 ${y-11}h1v1h-1zM209 ${y-11}h1v1h-1z"/>`);
document.getElementById('traces').innerHTML=tr;document.getElementById('pads').innerHTML=pads;
// rows of pads: [x, y, columns, rows, pitch x, pitch y]
let rows='';
[[214,146,8,2,6,6],[274,141,16,1,6,6],[274,158,16,1,6,6],[297,165,19,2,6,6],[366,196,8,2,6,6],[505,141,16,1,6,6],[505,158,16,1,6,6],
[415,197,2,1,6,6],[434,197,2,1,6,6],[457,197,2,1,6,6],[480,197,2,1,6,6],[503,197,2,1,6,6],[526,197,2,1,6,6],[549,197,2,1,6,6],[572,197,2,1,6,6],
[417,214,8,3,23,11],[434,214,7,3,23,11],[440,214,7,3,23,11],[229,263,4,1,11,6],[234,274,4,1,11,6],[227,268,8,1,6,6],
[366,443,2,19,6,6],[297,597,19,2,6,6],[646,450,2,17,6,6],[637,200,2,5,6,6],[653,200,2,5,6,6],[637,280,2,6,6,6],[653,280,2,6,6,6],[637,358,2,8,6,6],[653,358,2,8,6,6],[390,233,12,1,2,6],[592,485,1,10,6,6],[622,455,1,15,6,6],[433,510,1,4,6,6],[448,543,8,1,6,6],[367,625,1,1,6,6],[443,625,1,1,6,6]].forEach(([x,y,n,m,p,q])=>{for(let j=0;j<m;j++)for(let i=0;i<n;i++)rows+=`<path fill="#000" d="M${x+i*p} ${y+j*q}h4v2h1v2h-4z"/><path fill="#bda018" d="M${x+i*p+1} ${y+j*q+1}h3v3h-3z"/>`;});
document.getElementById('rows').innerHTML=rows;
</script>
</body>
</html>
